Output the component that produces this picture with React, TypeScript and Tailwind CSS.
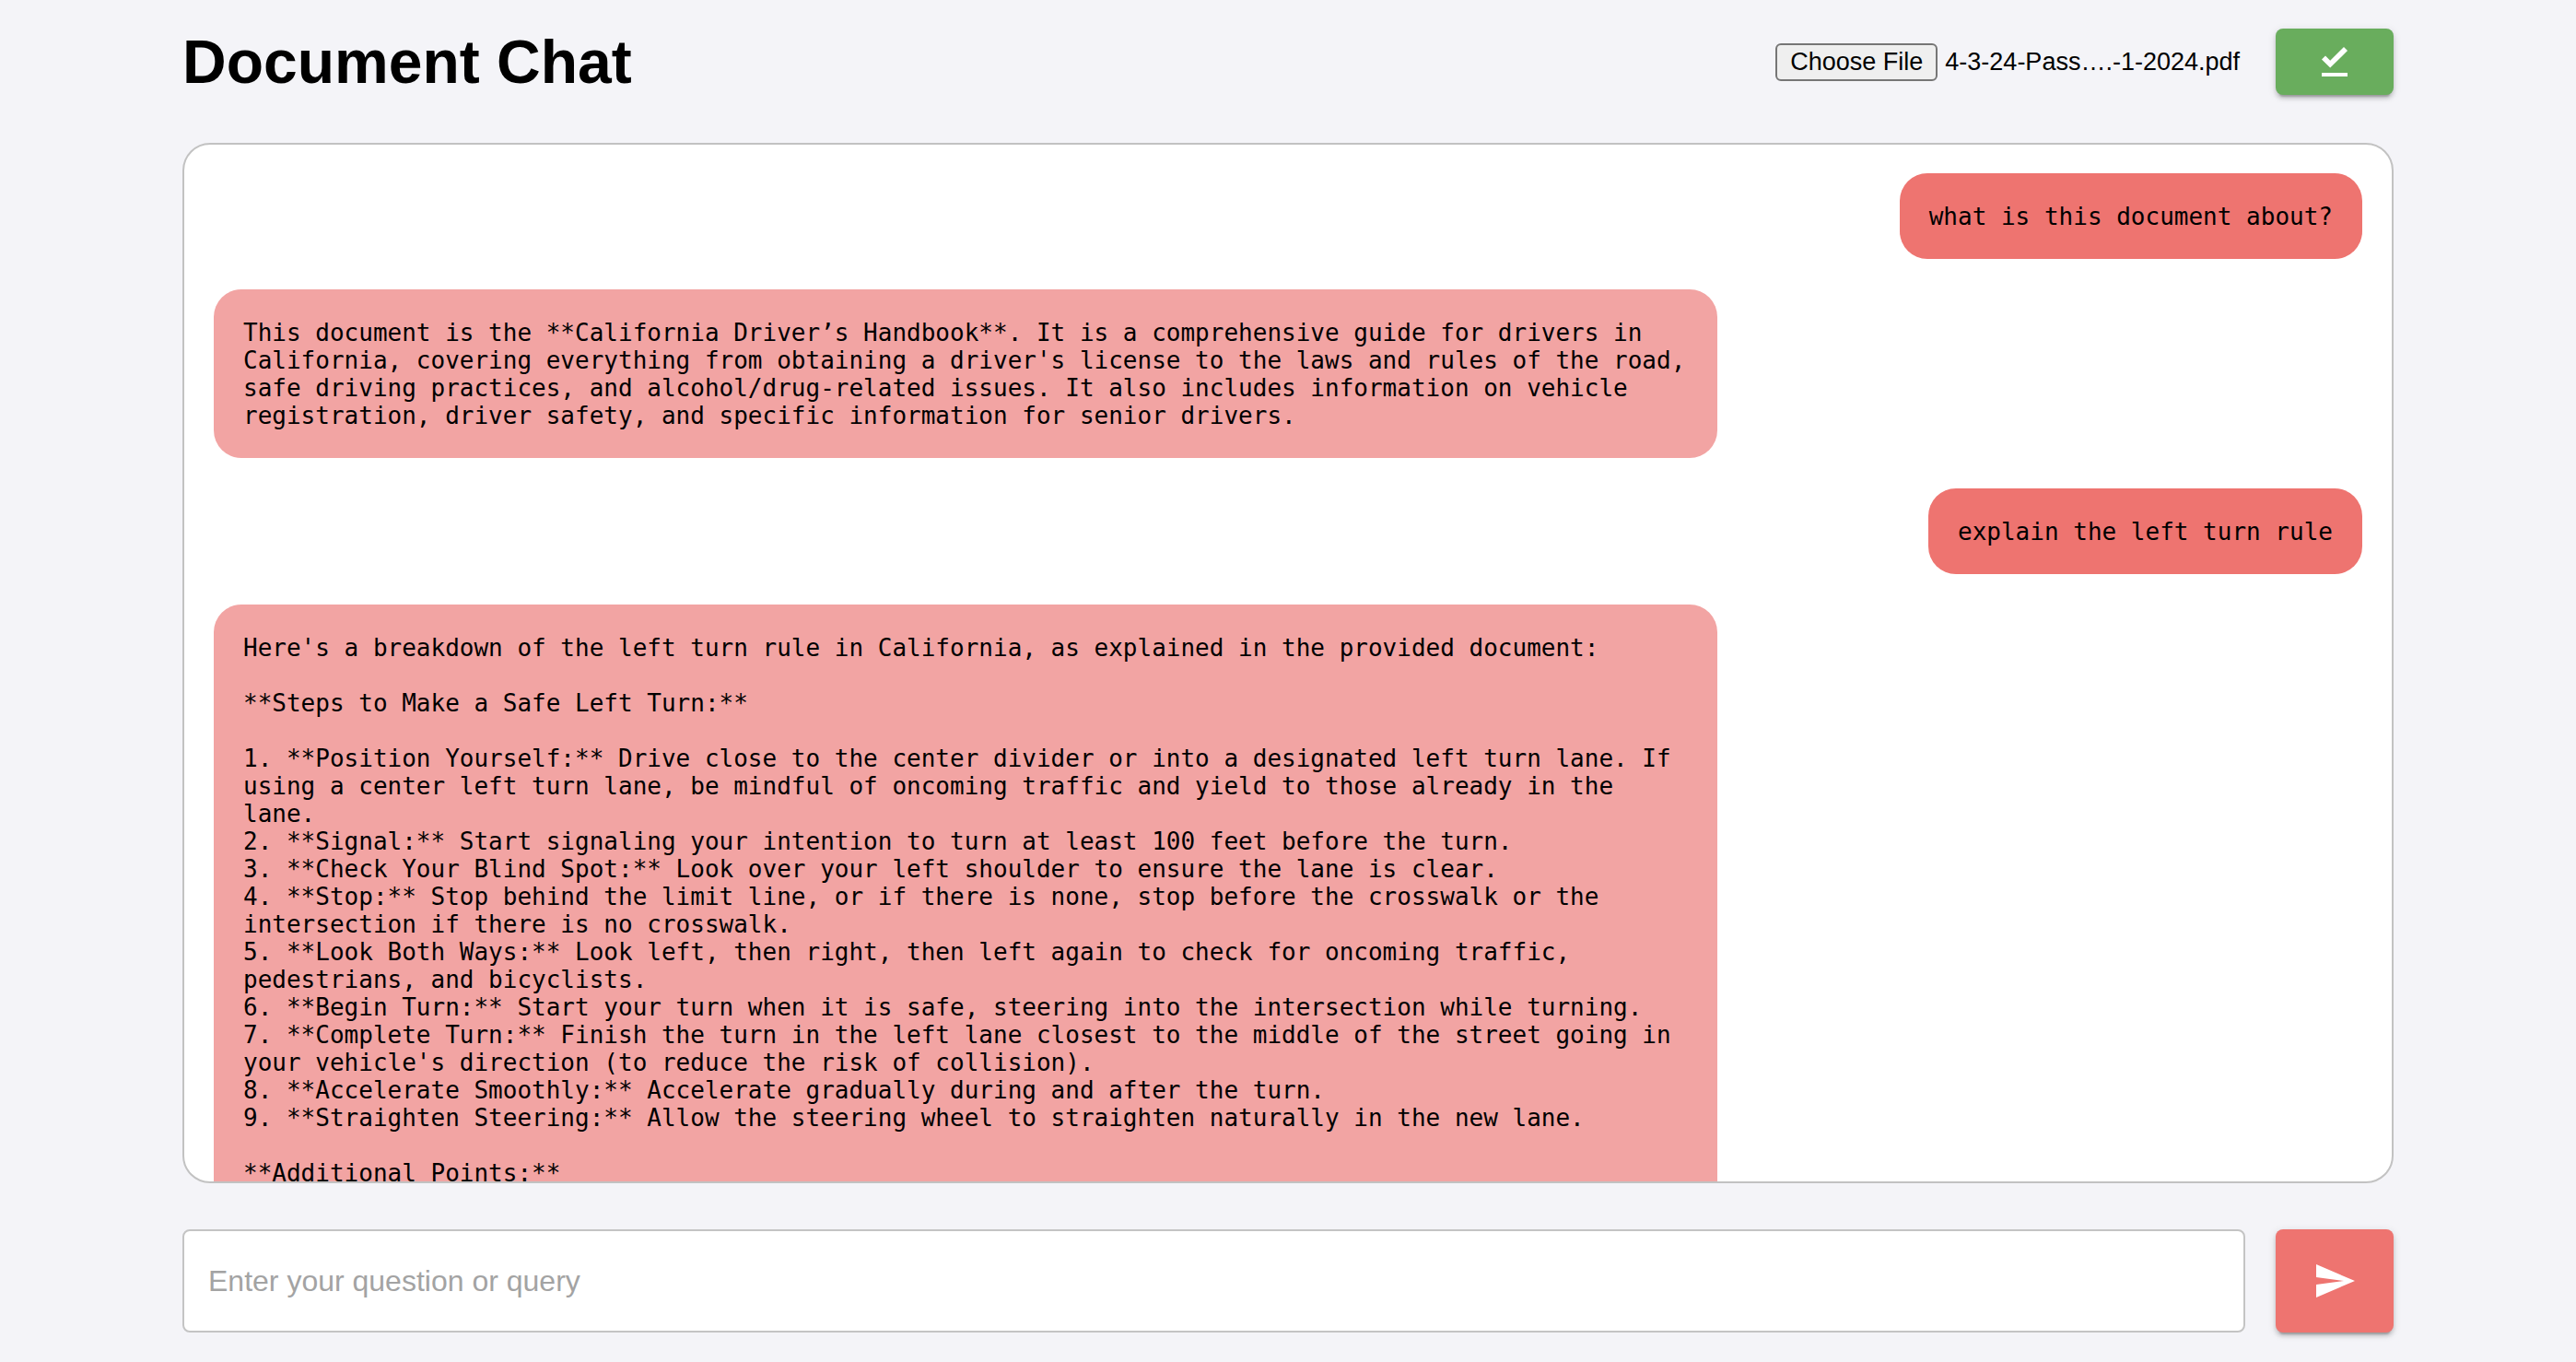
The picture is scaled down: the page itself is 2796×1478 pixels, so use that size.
import React from "react"

type Message = {
  role: "user" | "ai"
  lines: string[]
}

const messages: Message[] = [
  { role: "user", lines: ["what is this document about?"] },
  {
    role: "ai",
    lines: [
      "This document is the **California Driver’s Handbook**. It is a comprehensive guide for drivers in",
      "California, covering everything from obtaining a driver's license to the laws and rules of the road,",
      "safe driving practices, and alcohol/drug-related issues. It also includes information on vehicle",
      "registration, driver safety, and specific information for senior drivers.",
    ],
  },
  { role: "user", lines: ["explain the left turn rule"] },
  {
    role: "ai",
    lines: [
      "Here's a breakdown of the left turn rule in California, as explained in the provided document:",
      "",
      "**Steps to Make a Safe Left Turn:**",
      "",
      "1. **Position Yourself:** Drive close to the center divider or into a designated left turn lane. If",
      "using a center left turn lane, be mindful of oncoming traffic and yield to those already in the",
      "lane.",
      "2. **Signal:** Start signaling your intention to turn at least 100 feet before the turn.",
      "3. **Check Your Blind Spot:** Look over your left shoulder to ensure the lane is clear.",
      "4. **Stop:** Stop behind the limit line, or if there is none, stop before the crosswalk or the",
      "intersection if there is no crosswalk.",
      "5. **Look Both Ways:** Look left, then right, then left again to check for oncoming traffic,",
      "pedestrians, and bicyclists.",
      "6. **Begin Turn:** Start your turn when it is safe, steering into the intersection while turning.",
      "7. **Complete Turn:** Finish the turn in the left lane closest to the middle of the street going in",
      "your vehicle's direction (to reduce the risk of collision).",
      "8. **Accelerate Smoothly:** Accelerate gradually during and after the turn.",
      "9. **Straighten Steering:** Allow the steering wheel to straighten naturally in the new lane.",
      "",
      "**Additional Points:**",
      "",
      "* **Yield:** Always yield to pedestrians and vehicles that are close enough to be a hazard.",
      "* **Red Light:** You may turn left on a red light from a one-way street onto a one-way street,",
      "unless a sign prohibits it.",
    ],
  },
]

function DoneIcon() {
  return (
    <svg viewBox="0 0 24 24" className="h-[48px] w-[48px]" fill="white">
      <path d="M5 18h14v2H5v-2zm4.6-2.7L5 10.7l2-1.9 2.6 2.6L17 4l2 2-9.4 9.3z" />
    </svg>
  )
}

function SendIcon() {
  return (
    <svg viewBox="0 0 24 24" className="h-[48px] w-[48px]" fill="white">
      <path d="M2.01 21L23 12 2.01 3 2 10l15 2-15 2z" />
    </svg>
  )
}

function Bubble({ msg }: { msg: Message }) {
  const isUser = msg.role === "user"
  return (
    <div className={`flex ${isUser ? "justify-end" : "justify-start"}`}>
      <div
        className={`shrink-0 whitespace-pre rounded-[30px] px-[32px] py-[31.5px] font-['DejaVu_Sans_Mono',monospace] text-[26px] leading-[30px] text-black ${
          isUser ? "bg-[#ee7470]" : "w-[70%] bg-[#f2a4a3]"
        }`}
      >
        {msg.lines.join("\n")}
      </div>
    </div>
  )
}

export default function App() {
  return (
    <div className="min-h-screen bg-[#f4f4f8] font-['Liberation_Sans',Arial,sans-serif]">
      <div className="mx-auto flex w-[2400px] flex-col pt-[31px]">
        {/* Header */}
        <div className="flex h-[72px] items-center justify-between">
          <h1 className="text-[66px] font-bold leading-[72px] text-black">Document Chat</h1>
          <div className="flex items-center">
            <button className="h-[41px] rounded-[6px] border-2 border-[#767676] bg-[#efefef] px-[14px] text-[27px] leading-none text-black">
              Choose File
            </button>
            <span className="ml-[8px] text-[27px] text-black">4-3-24-Pass….-1-2024.pdf</span>
            <button className="ml-[39px] flex h-[72px] w-[128px] items-center justify-center rounded-[8px] bg-[#69ad5d] shadow-[0_6px_2px_-4px_rgba(0,0,0,0.2),0_4px_4px_0_rgba(0,0,0,0.14),0_2px_10px_0_rgba(0,0,0,0.12)]">
              <DoneIcon />
            </button>
          </div>
        </div>

        {/* Chat window */}
        <div className="mt-[52px] flex h-[1129px] flex-col gap-[33px] overflow-hidden rounded-[30px] border-2 border-[#c2c2c2] bg-white px-[32px] pt-[31px]">
          {messages.map((m, i) => (
            <Bubble key={i} msg={m} />
          ))}
        </div>

        {/* Input row */}
        <div className="mt-[50px] flex h-[112px] gap-[33px]">
          <input
            type="text"
            placeholder="Enter your question or query"
            className="h-full flex-1 rounded-[8px] border-2 border-[#c4c4c4] bg-white px-[26px] text-[32px] text-black outline-none placeholder:text-[#a3a3a3]"
          />
          <button className="flex h-full w-[128px] items-center justify-center rounded-[8px] bg-[#ee7470] shadow-[0_6px_2px_-4px_rgba(0,0,0,0.2),0_4px_4px_0_rgba(0,0,0,0.14),0_2px_10px_0_rgba(0,0,0,0.12)]">
            <SendIcon />
          </button>
        </div>
      </div>
    </div>
  )
}
